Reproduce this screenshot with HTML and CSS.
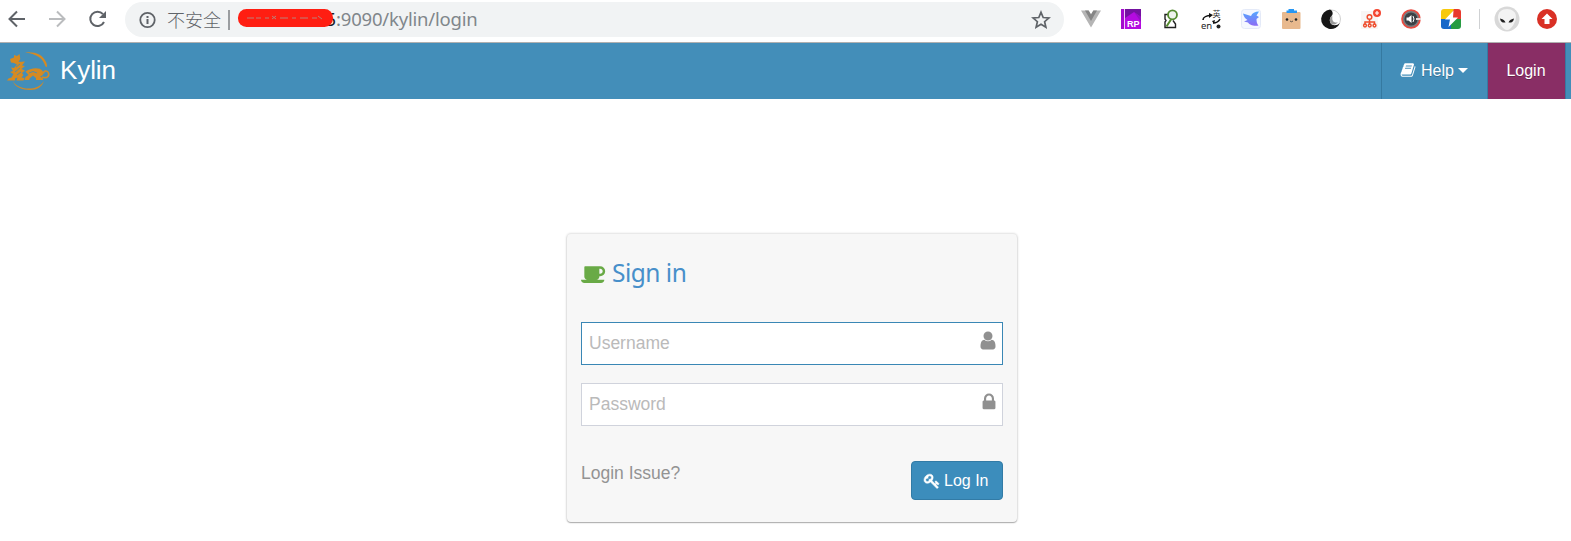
FILE: index.html
```
<!DOCTYPE html>
<html lang="en">
<head>
  <meta charset="UTF-8" />
  <meta name="viewport" content="width=device-width, initial-scale=1.0" />
  <title>Kylin</title>
  <link rel="stylesheet" href="styles.css">
</head>
<body>
  <div class="toolbar">
    <div class="history">
      <svg width="20" height="20" viewBox="0 0 20 20" fill="none" stroke="#5f6368" stroke-width="2"><path d="M18 10H3M10 2.500 2.500 10l7.500 7.500"/></svg>
      <svg width="20" height="20" viewBox="0 0 20 20" fill="none" stroke="#babcbe" stroke-width="2"><path d="M2 10h15M10 2.500l7.500 7.500-7.500 7.500"/></svg>
      <svg width="20" height="20" viewBox="0 0 20 20"><path d="M17 13A7.200 7.200 0 1 1 16 5.200" fill="none" stroke="#5f6368" stroke-width="2"/><path d="M19 2v7h-7z" fill="#5f6368"/></svg>
    </div>
    <div class="address">
      <svg class="info" width="18" height="18" viewBox="0 0 18 18"><circle cx="9.500" cy="9" r="7.200" fill="none" stroke="#5f6368" stroke-width="1.800"/><path d="M8.500 5h2v2h-2zM8.500 8h2v5h-2z" fill="#5f6368"/></svg>
      <span class="insecure">不安全</span>
      <span class="divider"></span>
      <span class="host">5
        <svg class="marker" width="95" height="18" viewBox="0 0 95 18"><rect width="95" height="18" rx="8.500" fill="#ff1e12"/><path d="M9 9h7M18 9h5M27 9h4M34 7l4 3M38 7l-4 3M42 9h8M54 9h4M62 9h8M74 9h5M80 7l4 3" fill="none" stroke="#b98078" stroke-width="1"/></svg>
      </span>
      <span class="path">:9090/kylin/login</span>
      <svg class="star" width="20" height="20" viewBox="0 0 20 20" fill="none" stroke="#5f6368" stroke-width="1.700"><path d="M10 2.300l2.200 5.200 5.700.5-4.300 3.700 1.300 5.600-4.900-3-4.900 3 1.300-5.600L2.100 8l5.700-.5z"/></svg>
    </div>
    <div class="extensions">
      <svg width="20" height="20" viewBox="0 0 20 20"><path d="M0 1.500h7.500L10 5.500l2.500-4H20l-10 17z" fill="#b5b5b5"/><path d="M4 1.500h3.700L10 5.500l2.300-4H16L10 12z" fill="#858585"/></svg>
      <svg width="20" height="20" viewBox="0 0 20 20"><path d="M0 0h20v20H0z" fill="#b40be0"/><path d="M0 0h3v20H0z" fill="#a30bcd"/><path d="M3 0h1v20H3z" fill="#f1c8fb"/><path d="M4 0h16v8l-7-5-9 6z" fill="#7412a0"/><path d="M13 3l7 5v5z" fill="#9410c4"/><text x="6" y="18" class="rp">RP</text></svg>
      <svg width="20" height="20" viewBox="0 0 20 20" fill="none"><path d="M7 5.500H4v4.500l1 1.500-1 1.500v5.500h10.500V15L12 11.500" stroke="#222" stroke-width="1.400"/><circle cx="11.500" cy="5.800" r="4.500" fill="#eef3ec" stroke="#558b2f" stroke-width="1.800"/><path d="M10 10.500l-4.500 7" stroke="#558b2f" stroke-width="2"/></svg>
      <svg width="20" height="20" viewBox="0 0 20 20" fill="none"><text x="11.500" y="8" class="ying">英</text><text x="0" y="19.500" class="en">en</text><path d="M2 11c0-3 4-4.500 8-4.500M12 14c4 0 6-2 7-4" stroke="#111" stroke-width="1.600"/><path d="M8 4l4 2-4 3zM11 12l3-1-1 4z" fill="#111"/><circle cx="17.500" cy="17.500" r="2" fill="#222"/></svg>
      <svg width="20" height="20" viewBox="0 0 20 20"><defs><linearGradient id="bird" x2="0" y2="1"><stop stop-color="#55a8ff"/><stop offset="1" stop-color="#8b6cf5"/></linearGradient></defs><rect x=".5" y=".5" width="19" height="19" rx="3" fill="#f5f8ff" stroke="#e4eaf8"/><path d="M2 4.500l8 2.500c1-3 4-4.500 8-4.500l-2.500 4L18 8l-2.500 2c0 3 .5 5 2 6.500-5 1-9.500-1-10.500-3L3 12.500l3.500-1.500C4 9.500 2.500 7 2 4.500z" fill="url(#bird)"/></svg>
      <svg width="20" height="20" viewBox="0 0 20 20"><rect x="1" y="3" width="18.500" height="17" rx="1" fill="#e8b98e"/><path d="M5.500 4V1.500h2V0h5.500v1.500h3V4z" fill="#2897f3"/><circle cx="6" cy="10.500" r="1.300" fill="#222"/><circle cx="15" cy="10.500" r="1.300" fill="#222"/><path d="M9 12q1.500 1.500 3 0" fill="none" stroke="#333" stroke-width=".8"/></svg>
      <svg width="20" height="20" viewBox="0 0 20 20"><circle cx="10.500" cy="10" r="9" fill="#fff" stroke="#d0d0d0"/><path d="M9 .5A9.800 9.800 0 1 0 19 14c-3 3-8 3-9.500 0C8 11 9 8.500 11 6.500 12.500 4.500 11.500 1.500 9 .5z" fill="#171717"/><path d="M9.500 14C8 11 9 8.500 11 6.500c1 1.500-.5 3.500 1 5.500 1 1.500 3 2 5 1-2 3-6 3.500-7.500 1z" fill="#999"/></svg>
      <svg width="20" height="20" viewBox="0 0 20 20"><path d="M0 2h17v18H0z" fill="#f8f6f5"/><g fill="none" stroke="#ee4d2d" stroke-width="1.500"><circle cx="8.500" cy="8" r="2.300"/><path d="M8.500 10.500v5M4 15.500V13h9.500v2.500"/><circle cx="4" cy="16.500" r="1.400"/><circle cx="8.700" cy="16.500" r="1.400"/><circle cx="13.500" cy="16.500" r="1.400"/></g><circle cx="16" cy="4" r="4" fill="#f44732"/><path d="M16 2v4M14 4h4" stroke="#fff" stroke-width="1.200"/></svg>
      <svg width="20" height="20" viewBox="0 0 20 20"><circle cx="10" cy="10" r="9.800" fill="#e94b40"/><circle cx="10" cy="10" r="7.300" fill="#3c4145" stroke="#777d80" stroke-width="1.500"/><path d="M15 9h5v2h-5z" fill="#e9d9d8"/><path d="M5.500 8.500h2L10.500 6v8l-3-2.500h-2z" fill="#fff"/><path d="M12 7q2 3 0 6" fill="none" stroke="#fff"/></svg>
      <svg width="20" height="20" viewBox="0 0 20 20"><path d="M10 0h7a3 3 0 0 1 3 3v7H10z" fill="#e9392d"/><path d="M3 0h10L8 10H0V3a3 3 0 0 1 3-3z" fill="#f7c90b"/><path d="M0 10h10v10H3a3 3 0 0 1-3-3z" fill="#1768c9"/><path d="M10 10h10v7a3 3 0 0 1-3 3h-7z" fill="#279b42"/><path d="M12.500 1.500L4 10.500h5L7.500 18 17 8.500h-5z" fill="#fff"/></svg>
    </div>
    <span class="tool-divider"></span>
    <svg class="avatar" width="26" height="26" viewBox="0 0 26 26"><circle cx="13" cy="13" r="12.500" fill="#d8d8d8"/><path d="M4 11c0-5 4-8 9-8s9 3 9 8-5 13-9 13-9-8-9-13z" fill="#f3f3f3"/><path d="M6 12.500c2 .5 5 1.500 5.500 4-2.500.5-5-.5-5.500-4zM20 12.500c-2 .5-5 1.500-5.500 4 2.500.5 5-.5 5.500-4z" fill="#222"/></svg>
    <svg class="update" width="20" height="20" viewBox="0 0 20 20"><circle cx="10" cy="10" r="10" fill="#d93025"/><path d="M10 4.500l5.500 5.500h-3v5h-5v-5h-3z" fill="#fff"/></svg>
  </div>

  <div class="navbar">
    <a class="brand" href="#">
      <svg width="42" height="40" viewBox="-1 0 42 40" fill="#d58a22">
        <path d="M17 1.500C27 .5 34 3 38 11c1 2 1.200 4 1 5l-1.500-.5C35 7 28 2.500 17 1.500z"/>
        <path d="M5 30c3 6 11 8 18 7.500 6-.5 10-3 13-7.500-2 6-7 9-14 9S6 36 5 30z"/>
        <path d="M11.500 3l.8 5-1.800 3 6.500-.5-3 4 3 .5-3.500 3 3.500 1.500-3 2.500 1.500 2-2 2.500 3 .5-1 2.500H8.500l1-3-2.500 1v2H-1l1.500-2 3-1 2-3.500L2 21l3-1-2-3.500 3 .5 3-3.500-3-1.500-3-.5-1-3.500 4-1.500V4l3 1z"/>
        <path d="M17.500 20.500c4-3 14-5 17-.5 2.500 3.500-1 5-2.500 5.500l3 2v1.500h-7v-2l-3-2.500-3 2.500-1 2h-4.500l1-3 3-2z"/>
        <path d="M34 26c5 2 7.500-1 6.500-4s-5-2.500-5 .5" fill="none" stroke="#d58a22" stroke-width="1.600"/>
        <path d="M8 16l4-3M7 21l5-4M9 24l4-3M21 22q4-3 8 0" fill="none" stroke="#448db8" stroke-width=".9"/>
      </svg>
      <span>Kylin</span>
    </a>
    <div class="menu">
      <a class="help" href="#">
        <svg width="16" height="16" viewBox="0 0 1792 1792" fill="#fff"><path d="M1703 478q40 57 18 129l-275 906q-19 64-76.500 107.500t-122.500 43.500h-923q-77 0-148.500-53.500t-99.500-131.500q-24-67-2-127 0-4 3-27t4-37q1-8-3-21.500t-3-19.500q2-11 8-21t16.500-23.500 16.500-23.500q23-38 45-91.500t30-91.500q3-10 .5-30t-.5-28q3-11 17-28t17-23q21-36 42-92t25-90q1-9-2.500-32t.5-28q4-13 22-30.500t22-22.500q19-26 42.500-84.500t27.500-96.500q1-8-3-25.500t-2-26.500q2-8 9-18t18-23 17-21q8-12 16.500-30.500t15-35 16-36 19.500-32 26.500-23.500 36-11.500 47.500 5.500l-1 3q38-9 51-9h761q74 0 114 56t18 130l-274 906q-36 119-71.500 153.500t-128.500 34.500h-869q-27 0-38 15-11 16-1 43 24 70 144 70h923q29 0 56-15.500t35-41.500l300-987q7-22 5-57 38 15 59 43zm-1064 2q-4 13 2 22.500t20 9.500h608q13 0 25.500-9.500t16.500-22.500l21-64q4-13-2-22.500t-20-9.500h-608q-13 0-25.500 9.500t-16.500 22.500zm-83 256q-4 13 2 22.500t20 9.500h608q13 0 25.500-9.500t16.500-22.500l21-64q4-13-2-22.500t-20-9.500h-608q-13 0-25.500 9.500t-16.500 22.500z"/></svg>
        <span>Help</span>
        <i class="caret"></i>
      </a>
      <a class="login-link" href="#">Login</a>
    </div>
  </div>

  <form class="login-box">
    <h4>
      <svg width="25" height="24" viewBox="0 0 1920 1792" fill="#69aa46"><path d="M1664 768q0-80-56-136t-136-56h-64v384h64q80 0 136-56t56-136zm-1664 640h1792q0 106-75 181t-181 75h-1280q-106 0-181-75t-75-181zm1856-640q0 159-112.500 271.500t-271.500 112.500h-64v32q0 92-66 158t-158 66h-704q-92 0-158-66t-66-158v-736q0-26 19-45t45-19h1152q159 0 271.500 112.500t112.500 271.500z"/></svg>
      <span>Sign in</span>
    </h4>
    <label class="field focused">
      <input type="text" placeholder="Username">
      <svg width="22" height="21" viewBox="0 0 1792 1792" fill="#909090"><path d="M1536 1399q0 109-62.500 187t-150.500 78h-854q-88 0-150.500-78t-62.500-187q0-85 8.500-160.500t31.500-152 58.500-131 94-89 134.500-34.500q131 128 313 128t313-128q76 0 134.500 34.500t94 89 58.500 131 31.500 152 8.500 160.500zm-256-887q0 159-112.500 271.500t-271.500 112.500-271.500-112.500-112.500-271.500 112.500-271.500 271.500-112.500 271.500 112.500 112.500 271.500z"/></svg>
    </label>
    <label class="field">
      <input type="password" placeholder="Password">
      <svg class="lock" width="20" height="20" viewBox="0 0 1792 1792" fill="#909090"><path d="M640 768h512v-192q0-106-75-181t-181-75-181 75-75 181v192zm832 96v576q0 40-28 68t-68 28h-960q-40 0-68-28t-28-68v-576q0-40 28-68t68-28h32v-192q0-184 132-316t316-132 316 132 132 316v192h32q40 0 68 28t28 68z"/></svg>
    </label>
    <div class="actions">
      <span class="issue">Login Issue?</span>
      <button type="button">
        <svg width="16" height="16" viewBox="0 0 1792 1792" fill="#fff" stroke="#fff" stroke-width="60"><path d="M832 512q0-80-56-136t-136-56-136 56-56 136q0 42 19 83-41-19-83-19-80 0-136 56t-56 136 56 136 136 56 136-56 56-136q0-42-19-83 41 19 83 19 80 0 136-56t56-136zm851 704q0 17-49 66t-66 49q-9 0-28.500-16t-36.500-33-38.500-40-24.500-26l-96 96 220 220q28 28 28 68 0 42-39 81t-81 39q-40 0-68-28l-671-671q-176 131-365 131-163 0-265.500-102.500t-102.500-265.500q0-160 95-313t248-248 313-95q163 0 265.500 102.500t102.500 265.500q0 189-131 365l355 355 96-96q-3-3-26-24.500t-40-38.500-33-36.500-16-28.500q0-17 49-66t66-49q13 0 23 10 6 6 46 44.500t82 79.500 86.500 86 73 78 28.500 41z"/></svg>
        <span>Log In</span>
      </button>
    </div>
  </form>
</body>
</html>
```
FILE: styles.css
```
* {
  box-sizing: border-box;
}

body {
  font-family: "Liberation Sans", Arial, sans-serif;
  background: #fff;
  margin: 0;
  height: 541px;
  overflow: hidden;
}

svg {
  display: block;
  flex-shrink: 0;
  overflow: visible;
}

/* browser bar */
.toolbar {
  display: flex;
  align-items: flex-start;
  height: 43px;
  padding: 2px 14px 0 7px;
  border-bottom: 1px solid #b0b0b0;
}

.history {
  display: flex;
  gap: 20px;
  width: 118px;
  padding-top: 7px;
}

.address {
  display: flex;
  align-items: center;
  width: 939px;
  height: 35px;
  padding: 0 13px;
  border-radius: 18px;
  background: #f1f3f4;
  color: #80868b;
  font-family: "Noto Sans", "Noto Sans CJK SC", sans-serif;
  font-size: 18.5px;
  line-height: 24px;
  white-space: nowrap;
}

.insecure {
  width: 54px;
  margin-left: 11px;
  padding-bottom: 2px;
  color: #5f6368;
  font-family: "Noto Sans CJK SC", sans-serif;
  font-size: 18px;
  font-weight: 300;
}

.divider {
  width: 2px;
  height: 20px;
  margin: 0 8px 0 7px;
  background: #9a9da0;
}

.host {
  position: relative;
  width: 98px;
  padding-bottom: 2px;
  color: #202124;
  text-align: right;
}

.marker {
  position: absolute;
  left: 0;
  top: 2px;
}

.path {
  padding-bottom: 2px;
  letter-spacing: -0.2px;
}

.star {
  margin-left: auto;
}

.extensions {
  display: flex;
  gap: 20px;
  padding: 7px 0 0 17px;
}

.rp {
  fill: #fff;
  font: bold 9px "Liberation Sans", sans-serif;
}

.ying {
  fill: #333;
  font: 8px "Noto Sans CJK SC", sans-serif;
}

.en {
  fill: #222;
  font: 9.5px "Noto Sans", sans-serif;
}

.tool-divider {
  width: 1px;
  height: 20px;
  margin: 7px 14px 0 18px;
  background: #cfd1d3;
}

.avatar {
  margin-top: 4px;
}

.update {
  margin: 7px 0 0 17px;
}

/* kylin header */
.navbar {
  display: flex;
  justify-content: space-between;
  height: 56px;
  padding-right: 5px;
  background: #438eb9;
}

.navbar a {
  color: #fff;
  text-decoration: none;
}

.brand {
  display: flex;
  padding: 8px 0 0 7px;
  font-size: 26px;
  line-height: 38px;
}

.brand span {
  margin-left: 11px;
  letter-spacing: -0.1px;
}

.menu {
  display: flex;
  font-size: 16px;
  line-height: 55px;
  text-shadow: 0 1px 0 rgba(0, 0, 0, 0.25);
}

.help {
  display: flex;
  align-items: center;
  width: 106px;
  padding: 0 0 2px 18px;
  border-left: 1px solid #3579a0;
}

.help span {
  margin: 0 4px 0 5px;
}

.caret {
  border: 5px solid transparent;
  border-top-color: #fff;
  border-bottom: 0;
}

.login-link {
  width: 79px;
  padding-right: 1px;
  border: solid #3779a1;
  border-width: 0 1px;
  background: #892e65;
  text-align: center;
}

/* sign in */
.login-box {
  width: 450px;
  height: 288px;
  margin: 135px 0 0 567px;
  padding: 22px 14px 0;
  border-radius: 4px;
  background: #f7f7f7;
  box-shadow: 0 0 2px 1px rgba(0, 0, 0, 0.12), 0 1px 1px rgba(0, 0, 0, 0.25);
}

h4 {
  display: flex;
  align-items: center;
  height: 34px;
  margin: 0 0 32px;
  color: #478fca;
  font-family: "Noto Sans", sans-serif;
  font-size: 24.5px;
  font-weight: 400;
  letter-spacing: -0.5px;
}

h4 span {
  margin-left: 6px;
  padding-bottom: 2px;
}

.field {
  display: flex;
  height: 43px;
  margin-bottom: 18px;
  padding: 0 3px 0 7px;
  border: 1px solid #d0d3dc;
  background: #fff;
}

.focused {
  border-color: #3a87b5;
}

.field svg {
  margin-top: 7px;
}

.field .lock {
  margin-top: 8px;
}

.field input {
  flex: 1;
  padding: 0;
  border: 0;
  outline: 0;
  background: none;
  font: 17.5px "Liberation Sans", Arial, sans-serif;
}

.field input::placeholder {
  color: #bababa;
}

.actions {
  display: flex;
  justify-content: space-between;
  margin-top: 35px;
}

.issue {
  color: #939393;
  font-size: 17.5px;
  line-height: 25px;
}

button {
  display: flex;
  align-items: center;
  width: 92px;
  height: 39px;
  padding: 0 0 0 12px;
  border: 1px solid #327ba6;
  border-radius: 4px;
  background: #3c8dbc;
  color: #fff;
  font: 16px "Liberation Sans", Arial, sans-serif;
}

button span {
  margin-left: 4px;
}
```
